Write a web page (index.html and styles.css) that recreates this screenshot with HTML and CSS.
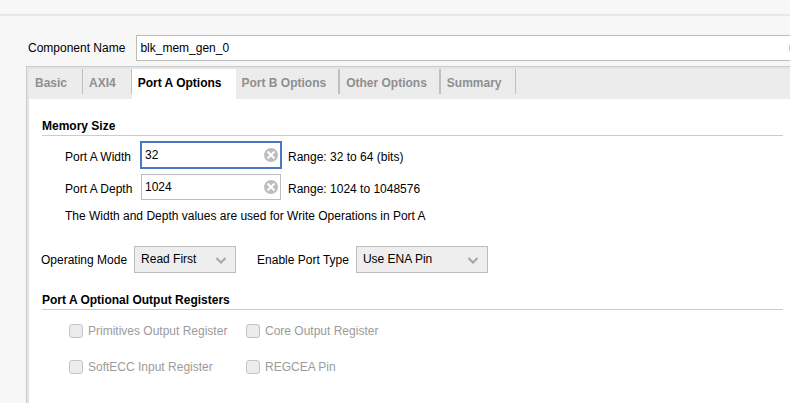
FILE: index.html
```html
<!DOCTYPE html>
<html lang="en">
<head>
<meta charset="utf-8">
<title>Block Memory Generator</title>
<link rel="stylesheet" href="styles.css">
</head>
<body>
<header class="topbar"></header>
<main class="main">
  <div class="name-row">
    <label for="name">Component Name</label>
    <div class="field name-field">
      <input id="name" type="text" value="blk_mem_gen_0">
      <button class="clear" type="button" aria-label="Clear name"><svg viewBox="0 0 14 14"><circle cx="7" cy="7" r="7"/><path d="M3.5 3.5l7 7M10.500 3.500l-7 7"/></svg></button>
    </div>
  </div>
  <section class="panel">
    <nav class="tabs" role="tablist">
      <button class="tab short line" type="button" role="tab">Basic</button>
      <button class="tab short line" type="button" role="tab">AXI4</button>
      <button class="tab active" type="button" role="tab" aria-selected="true">Port A Options</button>
      <button class="tab line thick" type="button" role="tab">Port B Options</button>
      <button class="tab line thick" type="button" role="tab">Other Options</button>
      <button class="tab line" type="button" role="tab">Summary</button>
    </nav>
    <div class="content">
      <h2>Memory Size</h2>
      <div class="sizes">
        <label for="width">Port A Width</label>
        <div class="field focused">
          <input id="width" type="text" value="32">
          <button class="clear" type="button" aria-label="Clear width"><svg viewBox="0 0 14 14"><circle cx="7" cy="7" r="7"/><path d="M3.5 3.5l7 7M10.500 3.500l-7 7"/></svg></button>
        </div>
        <span class="range">Range: 32 to 64 (bits)</span>
        <label for="depth">Port A Depth</label>
        <div class="field">
          <input id="depth" type="text" value="1024">
          <button class="clear" type="button" aria-label="Clear depth"><svg viewBox="0 0 14 14"><circle cx="7" cy="7" r="7"/><path d="M3.5 3.5l7 7M10.500 3.500l-7 7"/></svg></button>
        </div>
        <span class="range">Range: 1024 to 1048576</span>
      </div>
      <p class="note">The Width and Depth values are used for Write Operations in Port A</p>
      <div class="modes">
        <label for="mode">Operating Mode</label>
        <div class="select mode">
          <select id="mode"><option>Read First</option></select>
          <svg viewBox="0 0 10 7"><path d="M0.500 1l4.500 4.500 4.500-4.500"/></svg>
        </div>
        <label for="enable">Enable Port Type</label>
        <div class="select enable">
          <select id="enable"><option>Use ENA Pin</option></select>
          <svg viewBox="0 0 10 7"><path d="M0.500 1l4.500 4.500 4.500-4.500"/></svg>
        </div>
      </div>
      <h2>Port A Optional Output Registers</h2>
      <div class="checks">
        <label><input type="checkbox" disabled>Primitives Output Register</label>
        <label><input type="checkbox" disabled>Core Output Register</label>
        <label><input type="checkbox" disabled>SoftECC Input Register</label>
        <label><input type="checkbox" disabled>REGCEA Pin</label>
      </div>
    </div>
  </section>
</main>
</body>
</html>
```
FILE: styles.css
```css
* {
  box-sizing: border-box;
}

body {
  display: flex;
  flex-direction: column;
  min-height: 100vh;
  margin: 0;
  overflow: hidden;
  background: #f7f7f7;
  color: #000;
  font: 12px/16px "Liberation Sans", Arial, sans-serif;
}

input,
select,
button {
  font: inherit;
  color: inherit;
}

.topbar {
  height: 16px;
  border-bottom: 2px solid #e7e7e7;
}

.main {
  display: flex;
  flex: 1;
  flex-direction: column;
  padding: 19px 0 0 26px;
}

.name-row {
  display: flex;
  align-items: center;
  gap: 11px;
  margin-bottom: 5px;
  padding-left: 2px;
}

/* The name field runs on past the right edge of the window. */
.name-field {
  flex: 1;
  margin-right: -16px;
}

.field {
  position: relative;
  height: 26px;
  border: 1px solid #bdbdbd;
  background: #fff;
}

.field input {
  display: block;
  width: 100%;
  height: 24px;
  padding: 0 24px 0 3px;
  border: 0;
  outline: 0;
  background: none;
}

.focused {
  border-color: #4a78c8;
  box-shadow: 0 0 0 1px #4a78c8;
}

.clear {
  position: absolute;
  top: 5px;
  right: 2px;
  width: 14px;
  height: 14px;
  padding: 0;
  border: 0;
  background: none;
}

.clear svg {
  display: block;
  fill: #bdbdbd;
}

.clear path {
  stroke: #fff;
  stroke-width: 2;
}

.panel {
  display: flex;
  flex: 1;
  flex-direction: column;
  border-top: 1px solid #cbcbcb;
  border-left: 1px solid #cbcbcb;
  box-shadow: inset 2px 2px #e4e4e4;
  padding: 2px 0 0 2px;
}

.tabs {
  display: flex;
  height: 30px;
  background: #ececec;
}

.tab {
  height: 30px;
  padding: 0 14px 2px 6px;
  border: 0;
  background: none;
  color: #8f8f8f;
  font-weight: bold;
}

.short {
  padding-right: 16px;
}

.line {
  background: linear-gradient(#bfbfbf, #bfbfbf) right top / 1px 25px no-repeat;
}

.thick {
  background-size: 2px 25px;
}

.active {
  background: #fff;
  color: #000;
}

.content {
  flex: 1;
  padding: 19px 7px 0 13px;
  background: #fff;
}

h2 {
  margin: 0;
  padding-bottom: 1px;
  border-bottom: 1px solid #cbcbcb;
  font-size: 12px;
  line-height: 16px;
}

.sizes {
  display: grid;
  grid-template-columns: 76px 140px auto;
  row-gap: 6px;
  align-items: center;
  margin: 6px 0 0 23px;
}

.sizes label,
.range {
  padding-top: 4px;
}

.range {
  padding-left: 7px;
}

.note {
  margin: 8px 0 0 23px;
}

.modes {
  display: flex;
  align-items: center;
  gap: 7px;
  margin: 22px 0 19px -1px;
}

.select {
  position: relative;
}

.select select {
  display: block;
  appearance: none;
  width: 100%;
  height: 27px;
  padding: 0 20px 1px 6px;
  border: 1px solid #bdbdbd;
  border-radius: 0;
  background: #eee;
}

.select svg {
  position: absolute;
  top: 11px;
  right: 10px;
  width: 10px;
  height: 7px;
  fill: none;
  stroke: #a6a6a6;
  stroke-width: 2;
  pointer-events: none;
}

.mode {
  width: 102px;
  margin-right: 14px;
}

.enable {
  width: 132px;
}

.checks {
  display: grid;
  grid-template-columns: 177px auto;
  row-gap: 20px;
  margin: 13px 0 0 27px;
  color: #9b9b9b;
}

.checks label {
  display: flex;
  align-items: center;
  gap: 5px;
}

.checks input {
  appearance: none;
  width: 14px;
  height: 14px;
  margin: 0;
  border: 1px solid #c3c3c3;
  border-radius: 3px;
  background: #ebecee;
}
```
